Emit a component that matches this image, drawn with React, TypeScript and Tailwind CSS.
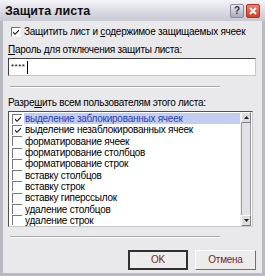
import React from 'react'

const font = { fontFamily: '"Liberation Sans", "DejaVu Sans", sans-serif' }

const permissions = [
  { label: 'выделение заблокированных ячеек', checked: true, selected: true },
  { label: 'выделение незаблокированных ячеек', checked: true },
  { label: 'форматирование ячеек' },
  { label: 'форматирование столбцов' },
  { label: 'форматирование строк' },
  { label: 'вставку столбцов' },
  { label: 'вставку строк' },
  { label: 'вставку гиперссылок' },
  { label: 'удаление столбцов' },
  { label: 'удаление строк' },
]

function Check() {
  return (
    <svg viewBox="0 0 8 8" className="w-[8px] h-[8px]">
      <path d="M1 3.5 L3 5.5 L7 1.5 L7 3 L3 7 L1 5 Z" fill="#111" />
    </svg>
  )
}

function ListCheckbox({ checked }: { checked?: boolean }) {
  return (
    <span className="w-[10px] h-[10px] shrink-0 border-l border-t border-[#7a7a7a] flex items-center justify-center">
      {checked && <Check />}
    </span>
  )
}

function ScrollArrow({ down }: { down?: boolean }) {
  return (
    <div className="h-[11px] w-[10px] shrink-0 bg-[#dcdcdc] border border-t-white border-l-white border-r-[#808080] border-b-[#808080] flex items-center justify-center">
      <svg viewBox="0 0 5 3" className="w-[5px] h-[3px]">
        <path d={down ? 'M0 0 H5 L2.5 3 Z' : 'M0 3 H5 L2.5 0 Z'} fill="#222" />
      </svg>
    </div>
  )
}

export default function App() {
  return (
    <div
      className="w-[265px] h-[276px] bg-[#e9e9eb] border-[3px] border-[#b9b9c2] border-t-0 flex flex-col text-[10px] tracking-[-0.25px] leading-[12px] text-black"
      style={font}
    >
      {/* title bar */}
      <div className="h-[21px] shrink-0 -mx-[3px] px-[5px] flex items-center justify-between bg-gradient-to-b from-[#f4f4f8] via-[#dcdce4] to-[#c8c8d2]">
        <span className="font-bold text-[12.5px] tracking-normal text-[#111]">Защита листа</span>
        <div className="flex gap-[2px]">
          <span className="w-[14px] h-[14px] rounded-[2px] border border-[#8a8aa0] bg-gradient-to-b from-[#e8e8f4] to-[#a9a9c0] text-[10px] font-bold text-[#334] flex items-center justify-center leading-none">
            ?
          </span>
          <span className="w-[14px] h-[14px] rounded-[2px] border border-[#b03020] bg-gradient-to-b from-[#f08070] to-[#d04020] flex items-center justify-center">
            <svg viewBox="0 0 8 8" className="w-[8px] h-[8px]">
              <path d="M1 1 L7 7 M7 1 L1 7" stroke="white" strokeWidth="1.8" />
            </svg>
          </span>
        </div>
      </div>

      <div className="flex flex-col px-[5px]">
        <label className="h-[12px] flex items-center gap-[3px] mt-[5px] ml-[3px]">
          <span className="w-[10px] h-[10px] bg-white border border-t-[#707070] border-l-[#707070] border-r-[#f4f4f4] border-b-[#f4f4f4] flex items-center justify-center">
            <Check />
          </span>
          <span>
            Защитить лист и <u>с</u>одержимое защищаемых ячеек
          </span>
        </label>

        <div className="mt-[6px] h-[12px]">
          <u>П</u>ароль для отключения защиты листа:
        </div>

        <div className="mt-[2px] h-[18px] w-[248px] bg-white border border-t-[#404040] border-l-[#404040] border-r-[#c8c8c8] border-b-[#c8c8c8] flex items-center pl-[2px]">
          <span className="text-[8px] tracking-[0.5px] leading-none">****</span>
          <span className="w-px h-[13px] bg-black ml-[2px]" />
        </div>

        <div className="mt-[10px] ml-[2px] w-[210px] h-[2px] border-t border-[#a8a8a8] border-b border-b-white" />

        <div className="mt-[9px] h-[12px]">
          Разре<u>ш</u>ить всем пользователям этого листа:
        </div>

        <div className="mt-[2px] w-[245px] h-[116px] bg-white border border-t-[#505050] border-l-[#505050] border-r-[#c8c8c8] border-b-[#c8c8c8] flex overflow-hidden">
          <div className="flex-1 flex flex-col pt-[1px] pl-[3px] overflow-hidden">
            {permissions.map((p) => (
              <div key={p.label} className="h-[11.3px] shrink-0 flex items-center gap-[2px]">
                <ListCheckbox checked={p.checked} />
                <span
                  className={`leading-[11px] pl-[1px] ${p.selected ? 'bg-[#c3cdf0] text-[#2a3cb8] flex-1' : ''}`}
                >
                  {p.label}
                </span>
              </div>
            ))}
          </div>
          <div className="w-[11px] flex flex-col bg-[repeating-linear-gradient(90deg,#ececf0_0px,#d6d6de_1px,#ececf0_2px)] border-l border-[#f0f0f0] mr-px">
            <ScrollArrow />
            <div className="flex-1 border-x border-[#9a9aa8]" />
            <ScrollArrow down />
          </div>
        </div>

        <div className="mt-[9px] ml-[2px] w-[210px] h-[2px] border-t border-[#a8a8a8] border-b border-b-white" />

        <div className="mt-[12px] flex justify-end gap-[7px] pr-[1px]">
          <button className="w-[60px] h-[20px] bg-[#ececec] border-2 border-[#303030] text-[#7a2424] flex items-center justify-center">
            OK
          </button>
          <button className="w-[61px] h-[20px] bg-[#ececec] border border-t-white border-l-white border-r-[#707070] border-b-[#707070] text-[#7a2424] flex items-center justify-center">
            Отмена
          </button>
        </div>
      </div>
    </div>
  )
}
